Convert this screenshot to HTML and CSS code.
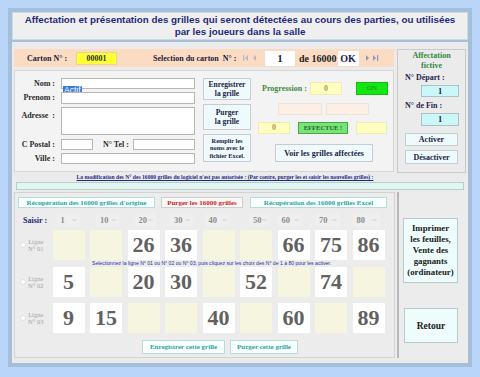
FILE: index.html
```html
<!DOCTYPE html>
<html lang="fr">
<head>
<meta charset="utf-8">
<title>Affectation des grilles</title>
<link rel="stylesheet" href="styles.css">
</head>
<body>
<div class="frame">
  <div class="title"><span class="t-line">Affectation et présentation des grilles qui seront détectées au cours des parties, ou utilisées</span><span class="t-line">par les joueurs dans la salle</span></div>
  <div class="main">
    <div class="top">
      <div class="top-left">
        <div class="carton-bar">
          <span class="carton-lbl">Carton N° :</span>
          <span class="carton-num">00001</span>
          <span class="sel-lbl">Selection du carton&nbsp; N° :</span>
          <svg class="nav nav-first" width="14" height="8" viewBox="0 0 14 8"><rect x="0" y="1" width="1.2" height="6" fill="#b4b8c8"/><path d="M5 1 L2 4 L5 7 Z" fill="#b4b8c8"/><path d="M13 1 L10 4 L13 7 Z" fill="#b4b8c8"/></svg>
          <span class="pos-box">1</span>
          <span class="de">de 16000</span>
          <span class="ok-box">OK</span>
          <svg class="nav nav-last" width="14" height="8" viewBox="0 0 14 8"><path d="M1 1 L4 4 L1 7 Z" fill="#8a98c8"/><path d="M8 1 L11 4 L8 7 Z" fill="#8a98c8"/><rect x="12" y="1" width="1.2" height="6" fill="#8a98c8"/></svg>
        </div>
        <div class="form-panel">
          <div class="fields">
            <div class="frow r1"><span class="lbl">Nom :</span><div class="inp w134"><span class="sel">Actif</span></div></div>
            <div class="frow r2"><span class="lbl">Prenom :</span><div class="inp w134"></div></div>
            <div class="frow r3"><span class="lbl lbl-top">Adresse &nbsp;:</span><div class="inp w134"></div></div>
            <div class="frow r4"><span class="lbl">C Postal :</span><div class="inp w32"></div><span class="lbl-tel">N° Tel :</span><div class="inp w62"></div></div>
            <div class="frow r5"><span class="lbl">Ville :</span><div class="inp w134"></div></div>
          </div>
          <div class="btn-col">
            <div class="sbtn b1">Enregistrer<br>la grille</div>
            <div class="sbtn b2">Purger<br>la grille</div>
            <div class="sbtn b3">Remplir les<br>noms avec le<br>fichier Excel.</div>
          </div>
          <div class="status">
            <div class="srow sa">
              <span class="prog">Progression :</span>
              <span class="ybox y1">0</span>
              <span class="onbox">ON</span>
            </div>
            <div class="srow sb">
              <span class="pbox p1"></span>
              <span class="pbox p2"></span>
            </div>
            <div class="srow sc">
              <span class="ybox y2">0</span>
              <span class="gbox">EFFECTUE !</span>
              <span class="ybox y3"></span>
            </div>
            <div class="sbtn voir">Voir les grilles affectées</div>
          </div>
        </div>
      </div>
      <div class="fictive">
        <div class="fic-title">Affectation<br>fictive</div>
        <div class="fic-lbl l1">N° Départ :</div>
        <div class="cbox c1">1</div>
        <div class="fic-lbl l2">N° de Fin :</div>
        <div class="cbox c2">1</div>
        <div class="sbtn fbtn act">Activer</div>
        <div class="sbtn fbtn des">Désactiver</div>
      </div>
    </div>
    <div class="notice">La modification des N° des 16000 grilles du logiciel n'est pas autorisée : (Par contre, purger les et saisir les nouvelles grilles) :</div>
    <div class="teal-bar"></div>
    <div class="bottom">
      <div class="grid-panel">
        <div class="gbtns">
          <span class="tbtn teal w137">Récupération des 16000 grilles d'origine</span>
          <span class="tbtn red w82">Purger les 16000 grilles</span>
          <span class="tbtn teal w137 m7">Récupération des 16000 grilles Excel</span>
        </div>
        <div class="grow saisir">
          <span class="saisir-lbl">Saisir :</span>
          <span class="dd o1">1<svg width="5" height="4" viewBox="0 0 5 4"><path d="M0.5 1 L2.5 3 L4.5 1" fill="none" stroke="#c4c4c4" stroke-width="0.8"/></svg></span>
          <span class="dd o2">10<svg width="5" height="4" viewBox="0 0 5 4"><path d="M0.5 1 L2.5 3 L4.5 1" fill="none" stroke="#c4c4c4" stroke-width="0.8"/></svg></span>
          <span class="dd o3">20<svg width="5" height="4" viewBox="0 0 5 4"><path d="M0.5 1 L2.5 3 L4.5 1" fill="none" stroke="#c4c4c4" stroke-width="0.8"/></svg></span>
          <span class="dd o4">30<svg width="5" height="4" viewBox="0 0 5 4"><path d="M0.5 1 L2.5 3 L4.5 1" fill="none" stroke="#c4c4c4" stroke-width="0.8"/></svg></span>
          <span class="dd o5">40<svg width="5" height="4" viewBox="0 0 5 4"><path d="M0.5 1 L2.5 3 L4.5 1" fill="none" stroke="#c4c4c4" stroke-width="0.8"/></svg></span>
          <span class="dd o6">50<svg width="5" height="4" viewBox="0 0 5 4"><path d="M0.5 1 L2.5 3 L4.5 1" fill="none" stroke="#c4c4c4" stroke-width="0.8"/></svg></span>
          <span class="dd o7">60<svg width="5" height="4" viewBox="0 0 5 4"><path d="M0.5 1 L2.5 3 L4.5 1" fill="none" stroke="#c4c4c4" stroke-width="0.8"/></svg></span>
          <span class="dd o8">70<svg width="5" height="4" viewBox="0 0 5 4"><path d="M0.5 1 L2.5 3 L4.5 1" fill="none" stroke="#c4c4c4" stroke-width="0.8"/></svg></span>
          <span class="dd o9">80<svg width="5" height="4" viewBox="0 0 5 4"><path d="M0.5 1 L2.5 3 L4.5 1" fill="none" stroke="#c4c4c4" stroke-width="0.8"/></svg></span>
        </div>
        <div class="grow line l-1">
          <span class="rlabel"><span class="radio"></span><span class="rtext">Ligne<br>N° 01</span></span>
          <span class="cell empty"></span><span class="cell empty"></span><span class="cell">26</span><span class="cell">36</span><span class="cell empty"></span><span class="cell empty"></span><span class="cell">66</span><span class="cell">75</span><span class="cell">86</span>
        </div>
        <div class="hint">Selectionnez la ligne N° 01 ou N° 02 ou N° 03, puis cliquez sur les choix des N° de 1 à 80 pour les activer.</div>
        <div class="grow line l-2">
          <span class="rlabel"><span class="radio"></span><span class="rtext">Ligne<br>N° 02</span></span>
          <span class="cell">5</span><span class="cell empty"></span><span class="cell">20</span><span class="cell">30</span><span class="cell empty"></span><span class="cell">52</span><span class="cell empty"></span><span class="cell">74</span><span class="cell empty"></span>
        </div>
        <div class="grow line l-3">
          <span class="rlabel"><span class="radio"></span><span class="rtext">Ligne<br>N° 03</span></span>
          <span class="cell">9</span><span class="cell">15</span><span class="cell empty"></span><span class="cell empty"></span><span class="cell">40</span><span class="cell empty"></span><span class="cell">60</span><span class="cell empty"></span><span class="cell">89</span>
        </div>
        <div class="gfoot">
          <span class="tbtn teal w83">Enregistrer cette grille</span>
          <span class="tbtn teal w68">Purger cette grille</span>
        </div>
      </div>
      <div class="print-panel">
        <div class="pbtn imprimer">Imprimer<br>les feuilles,<br>Vente des<br>gagnants<br>(ordinateur)</div>
        <div class="pbtn retour">Retour</div>
      </div>
    </div>
  </div>
</div>
</body>
</html>
```
FILE: styles.css
```css
* { box-sizing: border-box; }
body {
  margin: 0;
  background: #b9d5f8;
  font-family: "Liberation Serif", "DejaVu Serif", serif;
}
.frame {
  margin: 8px;
  width: 464px;
  height: 359px;
  padding: 4px;
  background: #a5bed9;
}
.title {
  height: 28px;
  background: #efefef;
  border: 1px solid #d2d8df;
  text-align: center;
  font: bold 9.8px/12px "Liberation Sans", Arial, sans-serif;
  color: #1f2a78;
  padding-top: 1px;
}
.t-line { display: block; white-space: nowrap; }
.main {
  margin-top: 2px;
  height: 321px;
  background: #ebebeb;
  padding: 7px 2px 0 2px;
}
.top { display: flex; gap: 3px; height: 124px; }
.top-left { width: 380px; }

/* carton bar */
.carton-bar {
  height: 18px;
  background: #fbdcc2;
  display: flex;
  align-items: center;
  font-weight: bold;
  font-size: 8px;
  color: #22223e;
  white-space: nowrap;
}
.carton-lbl { margin-left: 13px; width: 49px; }
.carton-num {
  width: 41px; height: 13px;
  background: #ffff33;
  border: 1px solid #dada90;
  text-align: center;
  line-height: 11px;
  color: #333;
}
.sel-lbl { margin-left: 36px; width: 88px; }
.nav-first { margin-left: 2px; }
.pos-box {
  margin-left: 8px;
  width: 30px; height: 15px;
  background: #fff;
  text-align: center;
  font-size: 11px;
  line-height: 15px;
  color: #222;
}
.de { margin-left: 4px; margin-right: 1px; font-size: 10px; color: #222; }
.ok-box {
  width: 21px; height: 15px;
  background: #fff;
  text-align: center;
  font-size: 10px;
  line-height: 15px;
  color: #1a2050;
}
.nav-last { margin-left: 6px; }

/* form panel */
.form-panel {
  margin-top: 3px;
  height: 102px;
  background: #f3f3f3;
  border: 1px solid #d6d6d6;
  display: flex;
  padding-top: 7px;
}
.fields { width: 182px; }
.frow { display: flex; align-items: flex-start; }
.r1 { height: 11px; }
.r2 { height: 12px; margin-top: 3px; }
.r3 { height: 28px; margin-top: 3px; }
.r4 { height: 11px; margin-top: 4px; }
.r5 { height: 11px; margin-top: 3px; }
.lbl {
  width: 40px;
  margin-right: 6px;
  text-align: right;
  font-weight: bold;
  font-size: 8px;
  line-height: 11px;
  color: #2c2c2c;
  white-space: nowrap;
}
.r2 .lbl { line-height: 12px; }
.lbl-top { padding-top: 3px; }
.lbl-tel {
  margin-left: 10px;
  width: 25px;
  margin-right: 5px;
  font-weight: bold;
  font-size: 8px;
  line-height: 11px;
  color: #2c2c2c;
  white-space: nowrap;
}
.inp {
  height: 100%;
  background: #fff;
  border: 1px solid #b6b6b6;
}
.w134 { width: 134px; }
.w32 { width: 32px; }
.w62 { width: 62px; }
.sel {
  display: inline-block;
  margin: 0 0 0 1px;
  background: #3a7bd8;
  color: #fff;
  font: 8.5px/9px "Liberation Sans", Arial, sans-serif;
  padding: 0 1px;
}

.btn-col { width: 48px; margin-left: 6px; }
.sbtn {
  background: #eefafc;
  border: 1px solid #c4ccd4;
  text-align: center;
  font-weight: bold;
  font-size: 7.5px;
  line-height: 9px;
  color: #1c1c44;
  display: flex;
  align-items: center;
  justify-content: center;
  white-space: nowrap;
}
.b1 { height: 22px; }
.b2 { height: 26px; margin-top: 4px; }
.b3 { height: 28px; margin-top: 4px; font-size: 6.3px; line-height: 7.5px; }

.status { width: 137px; margin-left: 4px; }
.srow { display: flex; align-items: center; }
.sa { margin-top: 4px; height: 13px; }
.prog {
  margin-left: 7px;
  width: 48px;
  font-weight: bold;
  font-size: 8px;
  color: #3b8a3b;
  white-space: nowrap;
}
.ybox {
  height: 100%;
  background: #ffffc2;
  border: 1px solid #eeeeb4;
  text-align: center;
  font-weight: bold;
  font-size: 8px;
  line-height: 11px;
  color: #b89a3a;
}
.y1 { width: 32px; }
.onbox {
  margin-left: 14px;
  width: 32px;
  height: 100%;
  background: #14e614;
  border: 1px solid #0fc00f;
  text-align: center;
  font-size: 7px;
  line-height: 11px;
  color: #1f8f1f;
}
.sb { margin-top: 8px; height: 12px; }
.pbox {
  height: 100%;
  background: #fbefe6;
  border: 1px solid #f2e2d6;
}
.p1 { margin-left: 23px; width: 44px; }
.p2 { margin-left: 4px; width: 43px; }
.sc { margin-top: 7px; height: 12px; }
.y2 { margin-left: 3px; width: 32px; line-height: 10px; }
.gbox {
  margin-left: 8px;
  width: 50px;
  height: 100%;
  background: #7ae27a;
  border: 1px solid #3fae3f;
  text-align: center;
  font-weight: bold;
  font-size: 6.5px;
  line-height: 10px;
  color: #1d6b1d;
  white-space: nowrap;
}
.y3 { margin-left: 8px; width: 31px; }
.voir { margin-top: 10px; margin-left: 20px; width: 98px; height: 18px; font-size: 8px; }

/* fictive */
.fictive {
  width: 69px;
  height: 124px;
  background: #ebebeb;
  border: 1px solid #cacaca;
}
.fic-title {
  text-align: center;
  font-weight: bold;
  font-size: 8px;
  line-height: 10px;
  color: #2f8a3a;
  padding-top: 1px;
}
.fic-lbl {
  margin-left: 7px;
  font-weight: bold;
  font-size: 8px;
  line-height: 9px;
  color: #1e2450;
}
.l1 { margin-top: 2px; }
.l2 { margin-top: 4px; }
.cbox {
  margin-left: 23px;
  width: 38px;
  background: #ccf7f8;
  border: 1px solid #a9c2c3;
  text-align: center;
  font-weight: bold;
  font-size: 8.5px;
  color: #1c1c3c;
}
.c1 { margin-top: 3px; height: 12px; line-height: 10px; }
.c2 { margin-top: 3px; height: 13px; line-height: 11px; }
.fbtn { margin-left: 7px; width: 53px; font-size: 8px; }
.act { margin-top: 7px; height: 13px; }
.des { margin-top: 4px; height: 14px; }

/* notice */
.notice {
  height: 9px;
  padding-right: 30px;
  text-align: center;
  font-weight: bold;
  font-size: 5.6px;
  line-height: 9px;
  color: #1c2a86;
  text-decoration: underline;
  white-space: nowrap;
}
.teal-bar {
  margin: 0 2px;
  height: 8px;
  background: #e2f5f1;
  border: 1px solid #b6cfca;
}

/* bottom */
.bottom { display: flex; gap: 2px; margin-top: 2px; height: 166px; }
.grid-panel {
  width: 381px;
  background: #ececec;
  border: 1px solid #d2d2d2;
  padding-top: 4px;
}
.gbtns { display: flex; height: 11px; margin-left: 3px; }
.tbtn {
  display: flex;
  align-items: center;
  justify-content: center;
  background: #f7ffff;
  border: 1px solid #b8dcdc;
  font-weight: bold;
  font-size: 7px;
  white-space: nowrap;
}
.teal { color: #2fa3a3; }
.red { color: #d42020; border-color: #cfcfcf; background: #f8f8f8; margin-left: 6px; }
.w137 { width: 137px; }
.w82 { width: 82px; }
.m7 { margin-left: 7px; }
.w83 { width: 83px; }
.w68 { width: 68px; margin-left: 5px; }

.grow {
  display: grid;
  grid-template-columns: repeat(10, 32px);
  column-gap: 5.5px;
}
.saisir { margin-top: 6px; height: 12px; align-items: center; }
.saisir-lbl {
  padding-left: 8px;
  font-weight: bold;
  font-size: 8px;
  color: #1e2a7a;
  white-space: nowrap;
}
.dd {
  display: flex;
  align-items: center;
  justify-content: space-between;
  width: 23px;
  height: 12px;
  padding: 0 3px 0 4px;
  background: #efefef;
  font-weight: bold;
  font-size: 8.5px;
  color: #8e8e8e;
}
.o1 { margin-left: 4px; }
.o2 { margin-left: 6px; }
.o3 { margin-left: 7px; width: 21px; }
.o4 { margin-left: 5px; }
.o5 { margin-left: 2px; width: 25px; }
.o6 { margin-left: 9px; width: 21px; }
.o7 { width: 24px; }
.o8 { width: 25px; }
.o9 { width: 27px; }

.line { height: 30px; }
.l-1 { margin-top: 4px; }
.l-3 { margin-top: 6px; }
.rlabel { display: flex; align-items: center; }
.radio {
  margin-left: 5px;
  width: 6px;
  height: 6px;
  border-radius: 50%;
  background: #fff;
  border: 1px solid #e0e0e0;
}
.rtext {
  margin-left: 2px;
  text-align: center;
  font-size: 6.5px;
  line-height: 7.5px;
  color: #a4a4a4;
  white-space: nowrap;
}
.cell {
  background: #fff;
  display: flex;
  align-items: center;
  justify-content: center;
  font-weight: bold;
  font-size: 22px;
  color: #616161;
}
.cell.empty { background: #f5f5e0; }
.hint {
  height: 7px;
  padding-left: 77px;
  font: 5.1px/7px "Liberation Sans", Arial, sans-serif;
  color: #26309a;
  white-space: nowrap;
}
.gfoot { display: flex; margin-top: 7px; margin-left: 127px; height: 14px; }

.print-panel {
  width: 69px;
  background: #ececec;
  border-left: 2px solid #b8b8b8;
  padding-left: 4px;
}
.pbtn {
  display: flex;
  align-items: center;
  justify-content: center;
  text-align: center;
  background: #effcfc;
  border: 1px solid #b6cccc;
  font-weight: bold;
  color: #202020;
}
.imprimer {
  margin-top: 26px;
  width: 55px;
  height: 65px;
  font-size: 8.8px;
  line-height: 11px;
}
.retour {
  margin-top: 25px;
  margin-left: 1px;
  width: 54px;
  height: 35px;
  font-size: 9.5px;
}
```
